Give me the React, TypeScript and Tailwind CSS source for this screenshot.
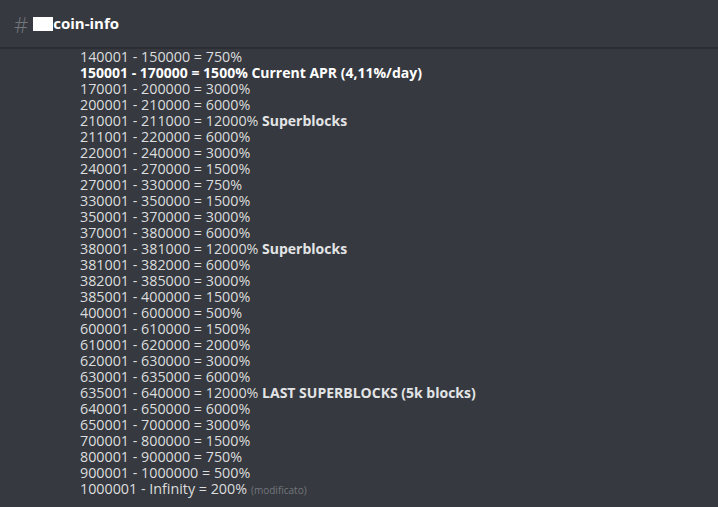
const rows: { text: string; bold?: boolean; tag?: string }[] = [
  { text: "140001 - 150000 = 750%" },
  { text: "150001 - 170000 = 1500% Current APR (4,11%/day)", bold: true },
  { text: "170001 - 200000 = 3000%" },
  { text: "200001 - 210000 = 6000%" },
  { text: "210001 - 211000 = 12000%", tag: "Superblocks" },
  { text: "211001 -  220000 = 6000%" },
  { text: "220001 - 240000 = 3000%" },
  { text: "240001 - 270000 = 1500%" },
  { text: "270001 - 330000 = 750%" },
  { text: "330001 - 350000 = 1500%" },
  { text: "350001 - 370000 = 3000%" },
  { text: "370001 - 380000 = 6000%" },
  { text: "380001 - 381000 = 12000%", tag: "Superblocks" },
  { text: "381001 - 382000 = 6000%" },
  { text: "382001 - 385000 = 3000%" },
  { text: "385001 - 400000 = 1500%" },
  { text: "400001 - 600000 = 500%" },
  { text: "600001 - 610000 = 1500%" },
  { text: "610001 - 620000 = 2000%" },
  { text: "620001 - 630000 = 3000%" },
  { text: "630001 - 635000 = 6000%" },
  { text: "635001 - 640000 = 12000%", tag: "LAST SUPERBLOCKS (5k blocks)" },
  { text: "640001 - 650000 = 6000%" },
  { text: "650001 - 700000 = 3000%" },
  { text: "700001 - 800000 = 1500%" },
  { text: "800001 - 900000 = 750%" },
  { text: "900001 - 1000000 = 500%" },
  { text: "1000001 - Infinity = 200%" },
];

export default function App() {
  return (
    <div className="flex h-[507px] w-[718px] flex-col overflow-hidden bg-[#36393f] font-['Open_Sans',sans-serif]">
      <header className="flex h-12 shrink-0 items-center border-b border-[#2b2d31] px-[14px] shadow-[0_1px_0_rgba(4,4,5,0.2)]">
        <span className="mr-[5px] text-[22px] font-light leading-none text-[#72767d]">#</span>
        <span className="h-[14px] w-[20px] bg-white" />
        <span className="text-[15px] font-bold text-white">coin-info</span>
      </header>
      <div className="flex flex-col pl-[80px] pt-[1px] text-[14.3px] leading-[16px] text-[#dcddde]">
        {rows.map((r, i) => (
          <div key={i} className={r.bold ? "text-[14px] font-bold text-white" : ""}>
            {r.text}
            {r.tag ? <span className="text-[14px] font-bold text-[#e3e4e6]"> {r.tag}</span> : null}
            {i === rows.length - 1 ? (
              <span className="ml-1 text-[10px] text-[#72767d]">(modificato)</span>
            ) : null}
          </div>
        ))}
      </div>
    </div>
  );
}
